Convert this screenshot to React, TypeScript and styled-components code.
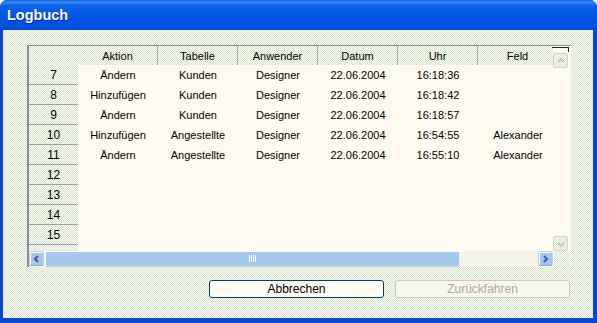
import React from "react";
import styled, { createGlobalStyle, css } from "styled-components";

const GlobalStyle = createGlobalStyle`
	body {
		margin: 0;
		background: #fff;
	}
`;

const dither = css`
	background: repeating-conic-gradient(#d6e5cf 0% 25%, #fdfbf1 0% 50%) 0 0 / 2px 2px;
`;

const Window = styled.div`
	width: 597px;
	height: 323px;
	display: flex;
	flex-direction: column;
	background: #0647d4;
	border-radius: 7px 7px 0 0;
	overflow: hidden;
	font-family: "Liberation Sans", Arial, sans-serif;
	font-size: 11px;
`;

const TitleBar = styled.div`
	height: 30px;
	flex: none;
	display: flex;
	align-items: center;
	padding: 0 0 0 7px;
	box-sizing: border-box;
	background: linear-gradient(
		to bottom,
		#0a5ee6 0%,
		#3a8af4 7%,
		#0c62e8 18%,
		#0057e4 55%,
		#0050dc 90%,
		#0048d2 100%
	);
	color: #fff;
	font-weight: bold;
	font-size: 14.5px;
	text-shadow: 1px 1px #0c2a8c;
`;

const Client = styled.div`
	flex: 1;
	margin: 0 4px 5px 3px;
	padding: 15px 0 0 24px;
	display: flex;
	flex-direction: column;
	${dither};
`;

const Grid = styled.div`
	width: 544px;
	height: 222px;
	box-sizing: border-box;
	border-left: 2px solid #8f8c9e;
	border-top: 1px solid #8f8c9e;
	display: flex;
	flex-direction: column;
	background: #fffbf0;
`;

const Body = styled.div`
	height: 205px;
	display: flex;
`;

const Table = styled.div`
	width: 524px;
	flex: none;
	overflow: hidden;
	display: flex;
	flex-direction: column;
`;

const Row = styled.div<{ head?: boolean }>`
	display: flex;
	flex: none;
	height: ${(p) => (p.head ? 19 : 20)}px;
	${(p) => p.head && dither};
`;

const Corner = styled.div`
	width: 49px;
	flex: none;
`;

const HeadCell = styled.div`
	width: 80px;
	flex: none;
	box-sizing: border-box;
	border-right: 1px solid #aaa8b6;
	display: flex;
	align-items: center;
	justify-content: center;
`;

const RowHead = styled.div`
	width: 49px;
	flex: none;
	box-sizing: border-box;
	border-bottom: 1px solid #a09eac;
	display: flex;
	align-items: center;
	justify-content: center;
	font-size: 12px;
	${dither};
`;

const Cell = styled.div`
	width: 80px;
	flex: none;
	display: flex;
	align-items: center;
	justify-content: center;
	white-space: nowrap;
`;

const VScroll = styled.div`
	width: 16px;
	flex: none;
	display: flex;
	flex-direction: column;
`;

const Cap = styled.div`
	height: 4px;
	margin: 1px 0 1px -1px;
	border-top: 1px solid #2a2a2a;
	border-right: 1px solid #2a2a2a;
`;

const Track = styled.div`
	flex: 1;
`;

const ArrowBtn = styled.div<{ disabled?: boolean }>`
	width: 15px;
	height: 15px;
	flex: none;
	box-sizing: border-box;
	border-radius: 2px;
	display: flex;
	align-items: center;
	justify-content: center;
	${(p) =>
		p.disabled
			? css`
					border: 1px solid #d3d4ca;
					${dither};
			  `
			: css`
					background: #a4c6f1;
					border: 1px solid #b6d2f4;
					border-bottom-color: #8fb0d8;
					box-shadow: inset 1px 1px #fff;
			  `}
`;

const HScroll = styled.div`
	height: 16px;
	display: flex;
	align-items: flex-start;
`;

const Thumb = styled.div`
	width: 413px;
	height: 13px;
	margin: 1px 0 0 2px;
	flex: none;
	background: #a4c8f0;
	border-bottom: 2px solid #b7d6d4;
	border-right: 1px solid #e8f0f4;
	display: flex;
	align-items: center;
	justify-content: center;
	gap: 1px;
`;

const Grip = styled.span`
	width: 1px;
	height: 7px;
	background: #fff;
`;

const HTrack = styled.div`
	width: 78px;
	height: 16px;
	flex: none;
	background: repeating-conic-gradient(#e8efe0 0% 25%, #fffbf0 0% 50%) 0 0 / 2px 2px;
`;

const ScrollCorner = styled.div`
	width: 16px;
	height: 16px;
	margin-left: 1px;
	flex: none;
	${dither};
`;

const Buttons = styled.div`
	width: 544px;
	margin-top: 13px;
	display: flex;
	justify-content: flex-end;
	gap: 11px;
	padding-right: 1px;
	box-sizing: border-box;
`;

const Button = styled.button<{ disabled?: boolean }>`
	width: 175px;
	height: 18px;
	padding: 0;
	box-sizing: border-box;
	border-radius: 3px;
	font-family: "Liberation Sans", Arial, sans-serif;
	font-size: 12px;
	border: 1px solid ${(p) => (p.disabled ? "#cac8bb" : "#003c74")};
	color: ${(p) => (p.disabled ? "#aca899" : "#000")};
	background: ${(p) => (p.disabled ? "#f8f7ef" : "#fffbf0")};
`;

const Chevron = ({ dir, color }: { dir: "l" | "r" | "u" | "d"; color: string }) => {
	const pts = {
		l: "5,1 2,4 5,7",
		r: "2,1 5,4 2,7",
		u: "1,5 4,2 7,5",
		d: "1,3 4,6 7,3",
	}[dir];
	return (
		<svg width="8" height="8" viewBox="0 0 8 8">
			<polyline points={pts} fill="none" stroke={color} strokeWidth="2" />
		</svg>
	);
};

const columns = ["Aktion", "Tabelle", "Anwender", "Datum", "Uhr", "Feld"];

// row 16 is only a sliver under the scrollbar, so it shows no number
const rows: { n: number | null; cells: string[] }[] = [
	{ n: 7, cells: ["Ändern", "Kunden", "Designer", "22.06.2004", "16:18:36", ""] },
	{ n: 8, cells: ["Hinzufügen", "Kunden", "Designer", "22.06.2004", "16:18:42", ""] },
	{ n: 9, cells: ["Ändern", "Kunden", "Designer", "22.06.2004", "16:18:57", ""] },
	{ n: 10, cells: ["Hinzufügen", "Angestellte", "Designer", "22.06.2004", "16:54:55", "Alexander"] },
	{ n: 11, cells: ["Ändern", "Angestellte", "Designer", "22.06.2004", "16:55:10", "Alexander"] },
	{ n: 12, cells: [] },
	{ n: 13, cells: [] },
	{ n: 14, cells: [] },
	{ n: 15, cells: [] },
	{ n: null, cells: [] },
];

const App = () => {
	return (
		<>
			<GlobalStyle />
			<Window>
				<TitleBar>Logbuch</TitleBar>
				<Client>
					<Grid>
						<Body>
							<Table>
								<Row head>
									<Corner />
									{columns.map((c) => (
										<HeadCell key={c}>{c}</HeadCell>
									))}
								</Row>
								{rows.map((r, idx) => (
									<Row key={idx}>
										<RowHead>{r.n}</RowHead>
										{r.cells.map((c, i) => (
											<Cell key={i}>{c}</Cell>
										))}
									</Row>
								))}
							</Table>
							<VScroll>
								<Cap />
								<ArrowBtn disabled>
									<Chevron dir="u" color="#c6c8c0" />
								</ArrowBtn>
								<Track />
								<ArrowBtn disabled>
									<Chevron dir="d" color="#c6c8c0" />
								</ArrowBtn>
							</VScroll>
						</Body>
						<HScroll>
							<ArrowBtn>
								<Chevron dir="l" color="#3d5f92" />
							</ArrowBtn>
							<Thumb>
								<Grip />
								<Grip />
								<Grip />
								<Grip />
							</Thumb>
							<HTrack />
							<ArrowBtn>
								<Chevron dir="r" color="#3d5f92" />
							</ArrowBtn>
							<ScrollCorner />
						</HScroll>
					</Grid>
					<Buttons>
						<Button>Abbrechen</Button>
						<Button disabled>Zurückfahren</Button>
					</Buttons>
				</Client>
			</Window>
		</>
	);
};

export default App;
